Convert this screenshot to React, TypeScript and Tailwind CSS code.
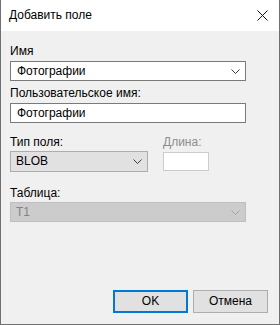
const Chevron = ({ color = "#3c3c3c" }: { color?: string }) => (
  <svg width="9" height="5" viewBox="0 0 9 5" className="shrink-0">
    <path d="M0.5 0.5 L4.5 4.5 L8.5 0.5" fill="none" stroke={color} strokeWidth="1" />
  </svg>
);

const App = () => {
  return (
    <div
      className="w-[280px] h-[325px] flex flex-col bg-[#f0f0f0] border-x border-b border-[#707070] text-[12px] leading-[15px] text-black"
      style={{ fontFamily: '"Liberation Sans", Arial, sans-serif' }}
    >
      {/* Title bar */}
      <div className="h-[31px] shrink-0 bg-white flex items-center justify-between pl-[8px] pr-[11px]">
        <span className="text-[12px]">Добавить поле</span>
        <svg width="11" height="11" viewBox="0 0 11 11">
          <path d="M0.5 0.5 L10.5 10.5 M10.5 0.5 L0.5 10.5" stroke="#111" strokeWidth="1" />
        </svg>
      </div>

      <div className="flex-1 flex flex-col pl-[9px] pr-[11px] pt-[13px] pb-[11px]">
        {/* Имя */}
        <div>Имя</div>
        <div className="mt-[2px] w-[236px] h-[20px] bg-white border border-[#7a7a7a] flex items-center justify-between pl-[6px] pr-[5px]">
          <span>Фотографии</span>
          <Chevron />
        </div>

        {/* Пользовательское имя */}
        <div className="mt-[5px]">Пользовательское имя:</div>
        <div className="mt-[2px] w-[236px] h-[20px] bg-white border border-[#7a7a7a] flex items-center pl-[6px]">
          <span>Фотографии</span>
        </div>

        {/* Тип поля / Длина */}
        <div className="mt-[12px] flex gap-[15px]">
          <div className="flex flex-col">
            <div>Тип поля:</div>
            <div className="mt-[1px] w-[138px] h-[21px] bg-[#e1e1e1] border border-[#adadad] flex items-center justify-between pl-[5px] pr-[5px]">
              <span>BLOB</span>
              <Chevron />
            </div>
          </div>
          <div className="flex flex-col">
            <div className="text-[#8d8d8d]">Длина:</div>
            <div className="mt-[2px] w-[46px] h-[19px] bg-white border border-[#cccccc]" />
          </div>
        </div>

        {/* Таблица */}
        <div className="mt-[14px]">Таблица:</div>
        <div className="mt-[1px] w-[236px] h-[20px] bg-[#cccccc] border border-[#bfbfbf] flex items-center justify-between pl-[5px] pr-[5px]">
          <span className="text-[#838383]">T1</span>
          <Chevron color="#a3a3a3" />
        </div>

        {/* Buttons */}
        <div className="mt-auto flex justify-end gap-[5px]">
          <button className="w-[75px] h-[23px] bg-[#e1e1e1] border-2 border-[#0078d7] flex items-center justify-center">
            OK
          </button>
          <button className="w-[75px] h-[23px] bg-[#e1e1e1] border border-[#adadad] flex items-center justify-center">
            Отмена
          </button>
        </div>
      </div>
    </div>
  );
};

export default App;
